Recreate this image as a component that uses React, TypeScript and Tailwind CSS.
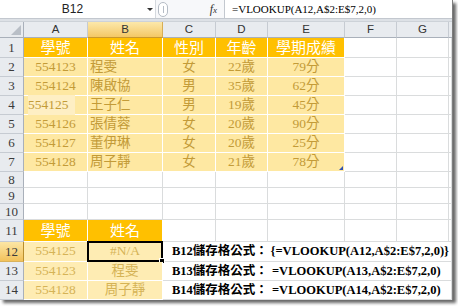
import React from "react";

const COLS = ["w-[64px]", "w-[75px]", "w-[53px]", "w-[52px]", "w-[77px]", "w-[52px]", "w-[52px]"];
const LETTERS = ["A", "B", "C", "D", "E", "F", "G"];
const serif = "font-['Liberation_Serif','Noto_Sans_CJK_TC',serif]";
const sans = "font-['Liberation_Sans',sans-serif]";
const cjk = "font-['Noto_Sans_CJK_TC',sans-serif]";
const grid = "border-r border-b border-[#DADCDD]";
const tbl = "border-r border-b border-white";

const data = [
  ["554123", "程雯", "女", "22歲", "79分"],
  ["554124", "陳啟協", "男", "35歲", "62分"],
  ["554125", "王子仁", "男", "19歲", "45分"],
  ["554126", "張倩蓉", "女", "20歲", "90分"],
  ["554127", "董伊琳", "女", "20歲", "25分"],
  ["554128", "周子靜", "女", "21歲", "78分"],
];

const lookups = [
  ["554125", "#N/A", "B12儲存格公式：", "{=VLOOKUP(A12,A$2:E$7,2,0)}"],
  ["554123", "程雯", "B13儲存格公式：", "=VLOOKUP(A13,A$2:E$7,2,0)"],
  ["554128", "周子靜", "B14儲存格公式：", "=VLOOKUP(A14,A$2:E$7,2,0)"],
];

function Row({ n, h, active, children }: { n: number; h: string; active?: boolean; children: React.ReactNode }) {
  return (
    <div className={`flex ${h}`}>
      <div
        className={`w-[24px] shrink-0 flex items-center justify-center border-b border-r text-[13px] text-[#3a3a3a] ${serif} ${
          active
            ? "bg-linear-to-b from-[#FCE6A4] to-[#F2C25A] border-b-[#D9B25A] border-r-[#B98E2E]"
            : "bg-[#E8EBEF] border-b-[#C6CBD2] border-r-[#A9B0BA]"
        }`}
      >
        {n}
      </div>
      {children}
      <div className={`flex-1 ${grid}`} />
    </div>
  );
}

function Empty({ i }: { i: number }) {
  return <div className={`${COLS[i]} shrink-0 ${grid}`} />;
}

function Head({ i, text }: { i: number; text: string }) {
  return (
    <div className={`${COLS[i]} shrink-0 ${tbl} bg-[#FFC000] text-white text-[15px] flex items-center justify-center ${cjk}`}>
      {text}
    </div>
  );
}

export default function App() {
  return (
    <div className="w-[458px] h-[306px] bg-white overflow-hidden">
      <div className="w-[453px] h-[300px] overflow-hidden bg-white border-r border-[#7d7d7d] shadow-[3px_3px_3px_rgba(0,0,0,0.6)]">
        {/* formula bar */}
        <div className="h-[19px] flex bg-white border-b border-[#C3C8CF]">
          <div className={`w-[145px] flex items-center justify-center text-[12px] text-[#222] ${sans}`}>B12</div>
          <div className="w-[10px] flex items-center justify-center">
            <div className="w-0 h-0 border-l-[3px] border-r-[3px] border-t-[3px] border-l-transparent border-r-transparent border-t-[#333]" />
          </div>
          <div className="w-[69px] flex items-center justify-between border-l border-[#D5D9DE] bg-[#F7F8FA] pl-[2px] pr-[7px]">
            <div className="w-[10px] h-[15px] rounded-full border border-[#B5BCC5] bg-white flex items-center justify-center">
              <div className="w-[1px] h-[7px] bg-[#B5BCC5]" />
            </div>
            <span className={`italic text-[12px] text-[#333] ${serif}`}>
              f<span className="text-[9px]">x</span>
            </span>
          </div>
          <div className={`flex-1 flex items-center pl-[7px] border-l border-[#C3C8CF] text-[11px] text-black ${serif}`}>
            =VLOOKUP(A12,A$2:E$7,2,0)
          </div>
        </div>
        <div className="h-[3px] bg-[#DDE1E6] border-b border-[#CDD2D8]" />

        {/* column headers */}
        <div className="flex h-[16px]">
          <div className="w-[24px] shrink-0 bg-[#E8EBEF] border-r border-b border-[#A9B0BA] relative">
            <div className="absolute right-[2px] bottom-[2px] w-0 h-0 border-l-[9px] border-t-[9px] border-l-transparent border-t-transparent border-b-0 border-r-0 [border-bottom:0] [border-right:0]" />
            <svg className="absolute right-[2px] bottom-[2px]" width="10" height="10">
              <polygon points="10,0 10,10 0,10" fill="#B9BFC7" />
            </svg>
          </div>
          {LETTERS.map((l, i) => (
            <div
              key={l}
              className={`${COLS[i]} shrink-0 flex items-center justify-center text-[11.5px] text-[#333] ${sans} border-r border-b ${
                i === 1
                  ? "bg-linear-to-b from-[#FCE8AA] to-[#F4C864] border-r-[#D7AE55] border-b-[#C9982F]"
                  : "bg-[#E8EBEF] border-r-[#C6CBD2] border-b-[#A9B0BA]"
              }`}
            >
              {l}
            </div>
          ))}
          <div className="flex-1 bg-[#E8EBEF] border-b border-[#A9B0BA]" />
        </div>

        {/* row 1 */}
        <Row n={1} h="h-[20px]">
          {["學號", "姓名", "性別", "年齡", "學期成績"].map((t, i) => (
            <Head key={t} i={i} text={t} />
          ))}
          <Empty i={5} />
          <Empty i={6} />
        </Row>

        {/* rows 2-7 */}
        {data.map((r, ri) => (
          <Row key={ri} n={ri + 2} h="h-[19px]">
            {r.map((v, i) => (
              <div
                key={i}
                className={`${COLS[i]} shrink-0 ${tbl} bg-[#FEE8A2] text-[#C39B38] text-[13.5px] flex items-center relative ${serif} ${
                  i === 1 ? "justify-start pl-[2px]" : ri === 2 && i === 0 ? "justify-start pl-[4px]" : "justify-center"
                }`}
              >
                {ri === 2 && i === 0 ? <span className="bg-[#FEEFC4] pr-[6px]">{v}</span> : v}
                {ri === 5 && i === 4 && (
                  <svg className="absolute right-[1px] bottom-[1px]" width="4" height="4">
                    <polygon points="4,0 4,4 0,4" fill="#3354B0" />
                  </svg>
                )}
              </div>
            ))}
            <Empty i={5} />
            <Empty i={6} />
          </Row>
        ))}

        {/* rows 8-10 */}
        {[8, 9, 10].map((n) => (
          <Row key={n} n={n} h="h-[16px]">
            {COLS.map((_, i) => (
              <Empty key={i} i={i} />
            ))}
          </Row>
        ))}

        {/* row 11 */}
        <Row n={11} h="h-[22px]">
          <Head i={0} text="學號" />
          <Head i={1} text="姓名" />
          {[2, 3, 4, 5, 6].map((i) => (
            <Empty key={i} i={i} />
          ))}
        </Row>

        {/* rows 12-14 */}
        {lookups.map((r, ri) => (
          <Row key={ri} n={ri + 12} h={ri === 0 ? "h-[20px]" : "h-[19px]"} active={ri === 0}>
            <div className={`${COLS[0]} shrink-0 ${tbl} bg-[#FEECB3] text-[#D5B356] text-[13.5px] flex items-center justify-center ${serif}`}>
              {r[0]}
            </div>
            <div className={`${COLS[1]} shrink-0 ${tbl} bg-[#FEECB3] text-[#D5B356] text-[13.5px] flex items-center justify-center relative ${serif}`}>
              {r[1]}
              {ri === 0 && (
                <div className="absolute -left-[1px] -top-[1px] -right-[1px] -bottom-[1px] border-2 border-black">
                  <div className="absolute -right-[4px] -bottom-[4px] w-[6px] h-[6px] bg-black border border-white" />
                </div>
              )}
            </div>
            <div className="w-[286px] shrink-0 border-b border-[#DADCDD] flex items-center whitespace-nowrap text-black font-bold">
              <span className={`w-[109px] pl-[9px] text-[12.5px] ${serif}`}>{r[2]}</span>
              <span className={`text-[12.5px] ${serif}`}>{r[3]}</span>
            </div>
          </Row>
        ))}
      </div>
    </div>
  );
}
